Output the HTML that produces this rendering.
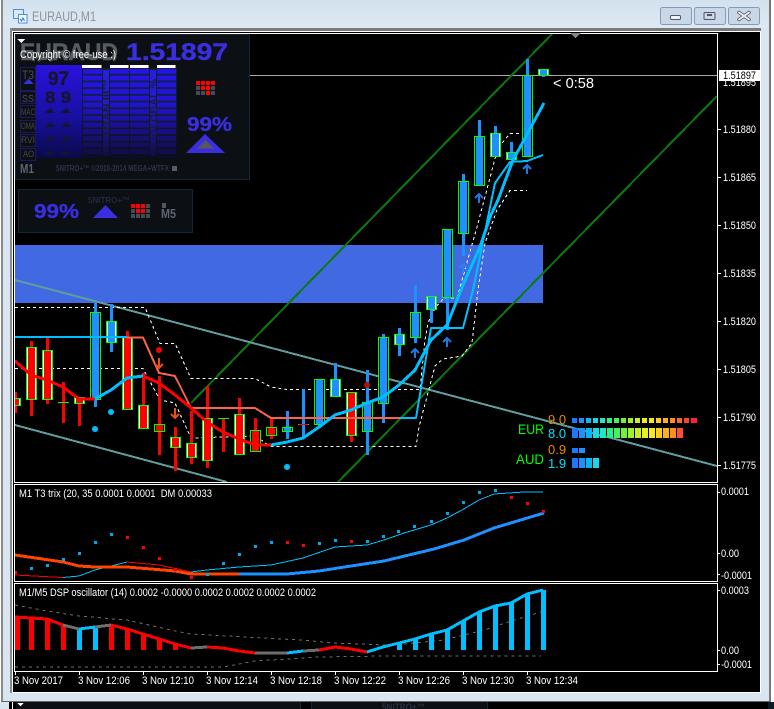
<!DOCTYPE html>
<html><head><meta charset="utf-8"><title>EURAUD,M1</title>
<style>
html,body{margin:0;padding:0;background:#fff;width:774px;height:709px;overflow:hidden}
svg{display:block}
text{font-family:"Liberation Sans",sans-serif;fill:#fff;font-size:11px}
.g{stroke:#0f0;stroke-width:1}
.w{fill:#fff}.k{fill:#000}
.r{fill:#f00}.b{fill:#1e90ff}
.l{fill:none;stroke-linejoin:round}
.ax{fill:#f4f4f4}
.d{fill:none;stroke:#fff;stroke-width:1;stroke-dasharray:3 3}
.gd{fill:none;stroke:#6e6e6e;stroke-width:1;stroke-dasharray:3 4}
</style></head><body>
<svg width="774" height="709" viewBox="0 0 774 709" xmlns="http://www.w3.org/2000/svg" shape-rendering="crispEdges">
<defs>
<linearGradient id="tb" x1="0" y1="0" x2="0" y2="1"><stop offset="0" stop-color="#d3e1ee"/><stop offset="1" stop-color="#dde8f3"/></linearGradient>
<linearGradient id="fade" x1="0" y1="0" x2="0" y2="1"><stop offset="0" stop-color="#0a0a14" stop-opacity="0"/><stop offset=".4" stop-color="#0a0a14" stop-opacity=".12"/><stop offset="1" stop-color="#0a0a14" stop-opacity=".82"/></linearGradient>
<linearGradient id="lc" x1="0" y1="0" x2="0" y2="1"><stop offset="0" stop-color="#2a12dc"/><stop offset=".5" stop-color="#1a10a8"/><stop offset="1" stop-color="#0a0a4a"/></linearGradient>
<pattern id="st" patternUnits="userSpaceOnUse" x="0" y="69" width="20" height="6.7"><rect width="20" height="6.7" fill="#0a2450"/><rect y="0" width="20" height="4.7" fill="#2a12e8"/></pattern>
<clipPath id="plot"><rect x="15" y="34" width="702" height="448"/></clipPath>
</defs>
<!-- window frame -->
<rect width="774" height="709" fill="#fff"/>
<rect x="1" y="0" width="769" height="702" fill="#d9e5f1"/>
<rect x="1" y="0" width="769" height="28" fill="url(#tb)"/>
<rect x="1" y="0" width="2" height="702" fill="#8a8a8a"/>
<rect x="769" y="0" width="2" height="702" fill="#777"/>
<rect x="10" y="28" width="751" height="3" fill="#7a7a7a"/>
<rect x="10" y="28" width="2" height="665" fill="#8a8a8a"/>
<rect x="12" y="31" width="749" height="662" fill="#fff"/>
<rect x="13" y="32" width="747" height="660" fill="#000"/>
<rect x="1" y="701" width="770" height="1" fill="#666"/>
<rect x="0" y="702" width="774" height="7" fill="#000"/>
<rect x="0" y="702" width="9" height="7" fill="#d9e5f1"/>
<rect x="12" y="702" width="1" height="7" fill="#fff"/>
<rect x="16" y="702" width="284" height="7" fill="#0c0f14"/>
<rect x="311" y="702" width="176" height="7" fill="#0c0f14"/>
<rect x="300" y="702" width="1" height="7" fill="#0f2a35"/>
<rect x="311" y="702" width="1" height="7" fill="#0f2a35"/>
<rect x="487" y="702" width="1" height="7" fill="#0f2a35"/>
<rect x="768" y="702" width="6" height="7" fill="#0c1a22"/>
<path d="M17 703h7l-3.500 3z" fill="#fff"/>
<text x="382" y="710" style="font-size:9px;font-weight:bold;fill:#2a3242" textLength="43" lengthAdjust="spacingAndGlyphs">5NITRO+™</text>

<!-- title bar -->
<g shape-rendering="auto">
<rect x="13.500" y="9.500" width="10" height="9" fill="#dbeafa" stroke="#4d90d8"/>
<rect x="18.500" y="14.500" width="8.500" height="8.500" fill="#f2f8ff" stroke="#4d90d8"/>
<path d="M20 19l1.500 2 1.500-3 1.500 3" fill="none" stroke="#2d7ad0"/>
<text x="32" y="21" style="font-size:13.500px;fill:#8d949b" textLength="64" lengthAdjust="spacingAndGlyphs">EURAUD,M1</text>
<rect x="660.500" y="7.500" width="31" height="17" rx="2" fill="#c8d8e8" stroke="#8a9ab5"/>
<rect x="694.500" y="7.500" width="31" height="17" rx="2" fill="#c8d8e8" stroke="#8a9ab5"/>
<rect x="728.500" y="7.500" width="31" height="17" rx="2" fill="#c8d8e8" stroke="#8a9ab5"/>
<rect x="670.500" y="15.500" width="10" height="4" rx="1" fill="#eef3f8" stroke="#556"/>
<rect x="704" y="12.500" width="11" height="7" rx="1" fill="none" stroke="#556"/>
<rect x="707" y="14" width="5" height="2" fill="#556"/>
<path d="M739 12.500l10 7M749 12.500l-10 7" stroke="#556" stroke-width="3.500" stroke-linecap="round"/>
<path d="M739 12.500l10 7M749 12.500l-10 7" stroke="#f0f4f8" stroke-width="1.800" stroke-linecap="round"/>
</g>

<!-- chart plot borders -->
<path d="M14.500 33.500H717.500V482.500H14.500Z" fill="none" stroke="#fff"/>
<path d="M14.500 484.500H717.500V581.500H14.500Z" fill="none" stroke="#fff"/>
<path d="M14.500 583.500H717.500V671.500H14.500Z" fill="none" stroke="#fff"/>

<!-- chart objects -->
<rect x="15" y="245" width="528" height="58" fill="#4169e1"/>
<path d="M250 75.500H717" stroke="#a8a8a8"/>
<g clip-path="url(#plot)">
<path d="M191 403L553 33" stroke="#0a7a0a" stroke-width="2" fill="none"/>
<path d="M338 482L717 96" stroke="#0a7a0a" stroke-width="2" fill="none"/>
<path d="M15 280L717 466" stroke="#5f9ea0" stroke-width="2" fill="none"/>
<path d="M15 425L227 482" stroke="#5f9ea0" stroke-width="2" fill="none"/>

<!-- dashed envelopes -->
<path class="d" d="M15 307.500H145L160 343.500H175L191 378.500H255L271 387L287 389.500H420L425 340L428 323L435 308L444 298H457L477 227L492 170L498 148L510 133.500H527"/>
<path class="d" d="M15 368.500H143L160 400L175 403L191 438L255 436L271 446.500H416L419 427L435 366L443 359L462 356L472 343L478 290L485 243L497 210L510 190.500H527"/>

<!-- candles -->
<path d="M15.500 392V413M31.500 341V416M47.500 337V404M63.500 382V423M79.500 397V426M127.500 331V409M143.500 373V428M159.500 376V455M175.500 427V471M191.500 411V464M207.500 386V468M223.500 418V452M239.500 398V454M255.500 418V451M271.500 418V439M351.500 392V442" stroke="#f00" stroke-width="3" fill="none"/>
<path d="M95.500 303V407M111.500 304V352M287.500 411V439M303.500 389V438M319.500 379V428M335.500 363V396M367.500 370V455M383.500 334V423M399.500 328V356M415.500 285V343M431.500 296V323M447.500 229V330M463.500 174V256M479.500 120V185M495.500 126V156M511.500 142V159M527.500 59V156M543.500 69V77" stroke="#1e90ff" stroke-width="3" fill="none"/>
<g class="g">
<rect x="10.500" y="398.500" width="10" height="7" class="w"/>
<rect x="26.500" y="347.500" width="10" height="52" class="w"/>
<rect x="42.500" y="350.500" width="10" height="49" class="w"/>
<rect x="74.500" y="397.500" width="10" height="6" class="w"/>
<rect x="90.500" y="312.500" width="10" height="87" class="k"/>
<rect x="106.500" y="321.500" width="10" height="21" class="w"/>
<rect x="122.500" y="337.500" width="10" height="72" class="w"/>
<rect x="138.500" y="405.500" width="10" height="23" class="w"/>
<rect x="154.500" y="424.500" width="10" height="7" class="k"/>
<rect x="170.500" y="437.500" width="10" height="10" class="w"/>
<rect x="186.500" y="443.500" width="10" height="14" class="w"/>
<rect x="202.500" y="418.500" width="10" height="42" class="w"/>
<rect x="234.500" y="414.500" width="10" height="40" class="w"/>
<rect x="250.500" y="430.500" width="10" height="21" class="k"/>
<rect x="266.500" y="427.500" width="10" height="8" class="k"/>
<rect x="282.500" y="427.500" width="10" height="4" class="k"/>
<rect x="314.500" y="379.500" width="10" height="45" class="k"/>
<rect x="330.500" y="379.500" width="10" height="17" class="w"/>
<rect x="346.500" y="392.500" width="10" height="43" class="w"/>
<rect x="362.500" y="402.500" width="10" height="29" class="k"/>
<rect x="378.500" y="337.500" width="10" height="66" class="k"/>
<rect x="394.500" y="334.500" width="10" height="10" class="w"/>
<rect x="410.500" y="312.500" width="10" height="25" class="k"/>
<rect x="426.500" y="296.500" width="10" height="13" class="w"/>
<rect x="442.500" y="229.500" width="10" height="68" class="k"/>
<rect x="458.500" y="181.500" width="10" height="52" class="k"/>
<rect x="474.500" y="136.500" width="10" height="49" class="k"/>
<rect x="490.500" y="133.500" width="10" height="23" class="w"/>
<rect x="506.500" y="152.500" width="10" height="7" class="w"/>
<rect x="522.500" y="75.500" width="10" height="81" class="k"/>
<rect x="538.500" y="69.500" width="10" height="6" class="w"/>
</g>
<path d="M58 402.500h11M218 418.500h11M298 424.500h11" stroke="#0f0"/>
<path d="M299 424.500h9" stroke="#f00"/>
<g class="r">
<rect x="12" y="399" width="7" height="6"/><rect x="28" y="348" width="7" height="51"/><rect x="44" y="351" width="7" height="48"/>
<rect x="76" y="398" width="7" height="5"/><rect x="124" y="338" width="7" height="71"/><rect x="140" y="406" width="7" height="22"/>
<rect x="156" y="425" width="7" height="6"/><rect x="172" y="438" width="7" height="9"/><rect x="188" y="444" width="7" height="13"/>
<rect x="204" y="419" width="7" height="41"/><rect x="236" y="415" width="7" height="39"/><rect x="252" y="431" width="7" height="20"/>
<rect x="268" y="428" width="7" height="7"/><rect x="348" y="393" width="7" height="42"/>
</g>
<g class="b">
<rect x="92" y="313" width="7" height="86"/><rect x="108" y="322" width="7" height="20"/><rect x="284" y="428" width="7" height="3"/>
<rect x="316" y="380" width="7" height="44"/><rect x="332" y="380" width="7" height="16"/><rect x="364" y="403" width="7" height="28"/>
<rect x="380" y="338" width="7" height="65"/><rect x="396" y="335" width="7" height="9"/><rect x="412" y="313" width="7" height="24"/>
<rect x="428" y="297" width="7" height="12"/><rect x="444" y="230" width="7" height="67"/><rect x="460" y="182" width="7" height="51"/>
<rect x="476" y="137" width="7" height="48"/><rect x="492" y="134" width="7" height="22"/><rect x="508" y="153" width="7" height="6"/>
<rect x="524" y="76" width="7" height="80"/><rect x="540" y="70" width="7" height="5"/>
</g>

<!-- moving averages -->
<path class="l" d="M127 337.500H143L159 373L175 376L191 408H255L271 418H400" stroke="#ff6347" stroke-width="2"/>
<path class="l" d="M15 337H127M400 418H416L431 328H463L473 290L495 183L510 162L527 161L543 155" stroke="#00bfff" stroke-width="2"/>
<path class="l" d="M15 361L31 375L47 380L63 387L79 399L95 399M143 376L159 383L175 395L191 408L207 422L223 432L239 439L255 445L271 445" stroke="#f00" stroke-width="3"/>
<path class="l" d="M95 399L111 390L127 378L143 376M271 445L287 442L303 438L319 427L335 415L351 410L367 403L383 397L399 385L415 370L431 340L447 325L463 285L480 247L490 217L498 200L513 160L523 142L531 127L544 103" stroke="#00bfff" stroke-width="3"/>
</g>
<g shape-rendering="auto">
<circle cx="159" cy="350" r="3" fill="#f00"/>
<circle cx="111" cy="412" r="3" fill="#00bfff"/>
<circle cx="95" cy="429" r="3" fill="#00bfff"/>
<circle cx="287" cy="467" r="3" fill="#00bfff"/>
<circle cx="367" cy="385" r="3" fill="#b01010"/>
<g fill="none" stroke-width="2">
<path d="M159 358V368M155 364l4 4 4-4" stroke="#e8501a"/>
<path d="M175 408V418M171 414l4 4 4-4" stroke="#e8501a"/>
<path d="M415 358V349M411 353l4-4 4 4" stroke="#1e78e8"/>
<path d="M447 347V338M443 342l4-4 4 4" stroke="#1e78e8"/>
<path d="M463 273V264M459 268l4-4 4 4" stroke="#2f80e8"/>
<path d="M479 203V194M475 198l4-4 4 4" stroke="#1e78e8"/>
<path d="M527 174V165M523 169l4-4 4 4" stroke="#1e78e8"/>
</g>
</g>

<path d="M570 33h11l-5.500 5z" fill="#888"/>
<text x="553" y="88" style="font-size:14.500px" textLength="41" lengthAdjust="spacingAndGlyphs">&lt; 0:58</text>

<!-- panel 1 -->
<rect x="15.500" y="34.500" width="234" height="145" fill="#0c0f14" stroke="#0f2a35"/>
<path d="M17 39h8l-4 4z" fill="#fff"/>
<text x="20" y="60" style="font-size:24px;font-weight:bold;fill:#565c64;stroke:#565c64;stroke-width:.4" textLength="98" lengthAdjust="spacingAndGlyphs">EURAUD</text>
<text x="126" y="60" style="font-size:24px;font-weight:bold;fill:#3a2fe0;stroke:#3a2fe0;stroke-width:.4" textLength="102" lengthAdjust="spacingAndGlyphs">1.51897</text>
<text x="21" y="59" style="font-size:11px;fill:#555" textLength="96" lengthAdjust="spacingAndGlyphs">Copyright © free-use :)</text>
<text x="20" y="58" style="font-size:11px" textLength="96" lengthAdjust="spacingAndGlyphs">Copyright © free-use :)</text>
<rect x="36" y="65" width="46" height="93" fill="url(#lc)"/>
<text x="48" y="85" style="font-size:19px;font-weight:bold;fill:#15152e;stroke:#15152e;stroke-width:.3" textLength="21" lengthAdjust="spacingAndGlyphs">97</text>
<text x="45" y="103" style="font-size:16.500px;font-weight:bold;fill:#15152e;stroke:#15152e;stroke-width:.3" textLength="26" lengthAdjust="spacingAndGlyphs">8 9</text>
<path d="M45 113h10l-5-5zM61 113h10l-5-5zM45 127h10l-5-5zM61 127h10l-5-5zM45 141h10l-5-5zM61 141h10l-5-5zM45 155h10l-5-5zM61 155h10l-5-5z" fill="#15152e" shape-rendering="auto"/>
<g fill="none" stroke="#1c1a5a">
<rect x="20.500" y="67.500" width="15" height="23"/><rect x="20.500" y="91.500" width="15" height="12"/>
<rect x="20.500" y="105.500" width="15" height="12"/><rect x="20.500" y="120.500" width="15" height="12"/>
<rect x="20.500" y="134.500" width="15" height="12"/><rect x="20.500" y="148.500" width="15" height="12"/>
</g>
<path d="M23 84h11l-5.500-5z" fill="#3a2fe0"/>
<text x="22" y="79" style="fill:#4a4f57;font-size:12px" textLength="12" lengthAdjust="spacingAndGlyphs">T3</text>
<text x="22" y="102" style="fill:#4a4f57;font-size:10.500px" textLength="12" lengthAdjust="spacingAndGlyphs">SS</text>
<text x="21" y="115" style="fill:#44494f;font-size:9px" textLength="14" lengthAdjust="spacingAndGlyphs">MAC</text>
<text x="21" y="129" style="fill:#44494f;font-size:9px" textLength="14" lengthAdjust="spacingAndGlyphs">OMA</text>
<text x="21" y="143" style="fill:#44494f;font-size:9px" textLength="14" lengthAdjust="spacingAndGlyphs">RVI</text>
<text x="23" y="157" style="fill:#44494f;font-size:9px" textLength="11" lengthAdjust="spacingAndGlyphs">AO</text>
<!-- bar columns -->
<rect x="82" y="68" width="95" height="90" fill="#0a2230"/>
<rect x="83" y="69" width="19" height="88" fill="url(#st)"/>
<rect x="110" y="69" width="19" height="88" fill="url(#st)"/>
<rect x="130" y="69" width="19" height="88" fill="url(#st)"/>
<rect x="157" y="69" width="19" height="88" fill="url(#st)"/>
<rect x="103" y="70" width="6" height="86" fill="#2a1ee0"/>
<rect x="150" y="70" width="6" height="86" fill="#2a1ee0"/>
<rect x="82" y="68" width="95" height="90" fill="url(#fade)"/>
<rect x="82" y="65" width="20" height="3" fill="#fff"/><rect x="101" y="65" width="1" height="3" fill="#e08020"/>
<rect x="110" y="65" width="19" height="3" fill="#fff"/><rect x="128" y="65" width="1" height="3" fill="#e08020"/>
<rect x="130" y="65" width="19" height="3" fill="#fff"/><rect x="148" y="65" width="1" height="3" fill="#e08020"/>
<rect x="157" y="65" width="19" height="3" fill="#fff"/><rect x="175" y="65" width="1" height="3" fill="#e08020"/>
<text transform="translate(110,137) rotate(-90)" style="font-size:10px;font-weight:bold;fill:#1a1a40" textLength="58" lengthAdjust="spacingAndGlyphs">TITAN III™</text>
<text transform="translate(157,137) rotate(-90)" style="font-size:10px;font-weight:bold;fill:#1a1a40" textLength="58" lengthAdjust="spacingAndGlyphs">GLOBAL %</text>
<!-- matrix -->
<path fill="#f00" d="M196 81h4v4h-4zM201 81h4v4h-4zM206 81h4v4h-4zM211 81h4v4h-4zM201 86h4v4h-4zM206 86h4v4h-4zM206 91h4v4h-4z"/>
<path fill="#444b55" d="M196 86h4v4h-4zM211 86h4v4h-4zM196 91h4v4h-4zM201 91h4v4h-4zM211 91h4v4h-4z"/>
<text x="187" y="131" style="font-size:20px;font-weight:bold;fill:#3a2fe0;stroke:#3a2fe0;stroke-width:.3" textLength="45" lengthAdjust="spacingAndGlyphs">99%</text>
<g shape-rendering="auto">
<path d="M186 153L205 134L225 153Z" fill="#3a2fe0"/>
<path d="M197 148.500L205.500 140L214 148.500Z" fill="#55585f"/>
</g>
<text x="20" y="173" style="font-size:13px;font-weight:bold;fill:#5c6570" textLength="14" lengthAdjust="spacingAndGlyphs">M1</text>
<text x="56" y="171" style="font-size:8px;font-weight:bold;fill:#2c3547" textLength="113" lengthAdjust="spacingAndGlyphs">5NITRO+™ ©2010-2014 MEGA+WTFX</text>
<rect x="172" y="166" width="5" height="5" fill="#555c66"/>

<!-- panel 2 -->
<rect x="18.500" y="189.500" width="174" height="43" fill="#0c0f14" stroke="#0f2a35"/>
<text x="34" y="218" style="font-size:20px;font-weight:bold;fill:#3a2fe0;stroke:#3a2fe0;stroke-width:.3" textLength="45" lengthAdjust="spacingAndGlyphs">99%</text>
<text x="88" y="203" style="font-size:8.500px;font-weight:bold;fill:#1e2c3c" textLength="42" lengthAdjust="spacingAndGlyphs">5NITRO+™</text>
<path d="M93 218L105.500 205L118 218Z" fill="#3a2fe0" shape-rendering="auto"/>
<path fill="#f00" d="M131 204h4v4h-4zM136 204h4v4h-4zM141 204h4v4h-4zM141 209h4v4h-4zM136 209h4v4h-4z"/>
<path fill="#444b55" d="M146 204h4v4h-4zM131 209h4v4h-4zM146 209h4v4h-4zM131 214h4v4h-4zM136 214h4v4h-4zM141 214h4v4h-4zM146 214h4v4h-4z"/>
<rect x="162" y="203" width="4" height="5" fill="#505864"/>
<text x="161" y="218" style="font-size:13px;font-weight:bold;fill:#5c6570" textLength="15" lengthAdjust="spacingAndGlyphs">M5</text>

<!-- currency legend -->
<text x="548" y="424" style="font-size:13px;fill:#e88a00">9.0</text>
<text x="548" y="438" style="font-size:13px;fill:#00e0ff">8.0</text>
<text x="518" y="434" style="font-size:13.500px;fill:#0f0" textLength="26" lengthAdjust="spacingAndGlyphs">EUR</text>
<text x="548" y="454" style="font-size:13px;fill:#e88a00">0.9</text>
<text x="548" y="468" style="font-size:13px;fill:#00e0ff">1.9</text>
<text x="516" y="464" style="font-size:13.500px;fill:#0f0" textLength="28" lengthAdjust="spacingAndGlyphs">AUD</text>
<g>
<rect x="572" y="418" width="5" height="5" fill="#1e78ff"/><rect x="579" y="418" width="5" height="5" fill="#1e90ff"/><rect x="586" y="418" width="5" height="5" fill="#0cb4f0"/><rect x="593" y="418" width="5" height="5" fill="#18d8e8"/><rect x="600" y="418" width="5" height="5" fill="#1ee8c8"/><rect x="607" y="418" width="5" height="5" fill="#28f090"/><rect x="614" y="418" width="5" height="5" fill="#48f060"/><rect x="621" y="418" width="5" height="5" fill="#70f040"/><rect x="628" y="418" width="5" height="5" fill="#a0f030"/><rect x="635" y="418" width="5" height="5" fill="#c8f028"/><rect x="642" y="418" width="5" height="5" fill="#e8f020"/><rect x="649" y="418" width="5" height="5" fill="#f8e820"/><rect x="656" y="418" width="5" height="5" fill="#ffd020"/><rect x="663" y="418" width="5" height="5" fill="#ffb020"/><rect x="670" y="418" width="5" height="5" fill="#ff9020"/><rect x="677" y="418" width="5" height="5" fill="#ff6828"/><rect x="684" y="418" width="5" height="5" fill="#ff4030"/><rect x="691" y="418" width="6" height="5" fill="#ff2040"/>
<rect x="572" y="428" width="6" height="10" fill="#1e78ff"/><rect x="579" y="428" width="6" height="10" fill="#1e90ff"/><rect x="586" y="428" width="6" height="10" fill="#0cb4f0"/><rect x="593" y="428" width="6" height="10" fill="#18d8e8"/><rect x="600" y="428" width="6" height="10" fill="#1ee8c8"/><rect x="607" y="428" width="6" height="10" fill="#28f090"/><rect x="614" y="428" width="6" height="10" fill="#48f060"/><rect x="621" y="428" width="6" height="10" fill="#70f040"/><rect x="628" y="428" width="6" height="10" fill="#a0f030"/><rect x="635" y="428" width="6" height="10" fill="#c8f028"/><rect x="642" y="428" width="6" height="10" fill="#e8f020"/><rect x="649" y="428" width="6" height="10" fill="#f8e820"/><rect x="656" y="428" width="6" height="10" fill="#ffd020"/><rect x="663" y="428" width="6" height="10" fill="#ffb020"/><rect x="670" y="428" width="6" height="10" fill="#ff9020"/><rect x="677" y="428" width="6" height="10" fill="#ff5030"/>
<rect x="572" y="448" width="6" height="5" fill="#1e78ff"/><rect x="579" y="448" width="6" height="5" fill="#1e90ff"/>
<rect x="572" y="458" width="6" height="10" fill="#1e78ff"/><rect x="579" y="458" width="6" height="10" fill="#1e90ff"/><rect x="586" y="458" width="6" height="10" fill="#0cb4f0"/><rect x="593" y="458" width="6" height="10" fill="#18d8e8"/>
</g>

<!-- sub window 1 -->
<text x="19" y="497" style="font-size:11px" textLength="193" lengthAdjust="spacingAndGlyphs">M1 T3 trix (20, 35 0.0001 0.0001 &#160;DM 0.00033</text>
<path class="l" d="M15 575L63 577.500M127 562L159 565L191 572" stroke="#f00" stroke-width="1"/>
<path class="l" d="M63 577.500L79 576L95 570L111 566L127 562M191 572L207 570L239 567L271 565L303 558L335 547L367 545L384 540L404 533L431 525L447 518L462 510L479 500L494 494L524 492L543 492" stroke="#00bfff" stroke-width="1"/>
<path class="l" d="M15 555L63 562L79 566L95 567L127 567L175 571L191 574L239 574" stroke="#ff4500" stroke-width="3"/>
<path class="l" d="M239 574H287L319 571L351 566L384 561L434 549L464 540L494 528L544 513" stroke="#1e90ff" stroke-width="3"/>
<path fill="#00a8e8" d="M30 567h3v3h-3zM46 564h3v3h-3zM62 558h3v3h-3zM78 552h3v3h-3zM94 541h3v3h-3zM110 533h3v3h-3zM206 573h3v3h-3zM222 562h3v3h-3zM238 553h3v3h-3zM254 545h3v3h-3zM270 541h3v3h-3zM318 542h3v3h-3zM334 539h3v3h-3zM366 540h3v3h-3zM382 535h3v3h-3zM397 530h3v3h-3zM413 525h3v3h-3zM430 520h3v3h-3zM446 512h3v3h-3zM462 501h3v3h-3zM478 491h3v3h-3zM494 489h3v3h-3z"/>
<path fill="#f00" d="M15 571h2v3h-2zM126 536h3v3h-3zM142 546h3v3h-3zM158 557h3v3h-3zM174 568h3v3h-3zM190 576h3v3h-3zM286 541h3v3h-3zM302 544h3v3h-3zM350 540h3v3h-3zM510 496h3v3h-3zM526 502h3v3h-3zM542 510h3v3h-3z"/>

<!-- sub window 2 -->
<text x="19" y="596" style="font-size:11px" textLength="297" lengthAdjust="spacingAndGlyphs">M1/M5 DSP oscillator (14) 0.0002 -0.0000 0.0002 0.0002 0.0002 0.0002</text>
<path class="gd" d="M15 605L47 611L79 616L127 620L175 631L191 634L300 640L335 643L384 645L404 644L444 640L472 633L491 628L502 624L521 618L541 612"/>
<path class="gd" d="M15 667H223L255 661L287 659L319 657L384 656H541"/>
<path fill="#f00" d="M15 617h5v33h-5zM29 619h5v31h-5zM45 619h5v31h-5zM61 625h5v25h-5zM109 625h5v25h-5zM125 629h5v21h-5zM141 634h5v16h-5zM157 639h5v11h-5zM173 644h5v6h-5z"/>
<path fill="#00bfff" d="M77 629h5v21h-5zM93 627h5v23h-5zM397 643h5v7h-5zM413 639h5v11h-5zM429 634h5v16h-5zM445 630h5v20h-5zM461 621h5v29h-5zM477 612h5v38h-5zM493 606h5v44h-5zM509 603h5v47h-5zM525 594h5v56h-5zM541 590h5v60h-5z"/>
<g fill="none" stroke-width="3" stroke-linejoin="round">
<path d="M15 617L47 619L63 625M111 625L127 629L143 634L159 639L175 644L191 648M207 647L223 648L239 651L255 653M319 650L335 647L351 649L367 652" stroke="#f00"/>
<path d="M63 625L79 629M95 627L111 625M191 648L207 647M255 653H287M303 651L319 650" stroke="#6e6e6e"/>
<path d="M79 629L95 627M287 653L303 651M367 652L383 647L399 643L415 639L431 634L447 630L463 621L479 612L495 606L511 603L527 594L543 590" stroke="#00bfff"/>
</g>

<!-- price axis -->
<g stroke="#fff">
<path d="M717 129.500h4M717 177.500h4M717 225.500h4M717 273.500h4M717 321.500h4M717 369.500h4M717 417.500h4M717 465.500h4M717 492.500h3M717 553.500h3M717 574.500h3M717 590.500h3M717 650.500h3M717 664.500h3"/>
<path d="M15.500 671v4M79.500 671v4M143.500 671v4M207.500 671v4M271.500 671v4M335.500 671v4M399.500 671v4M463.500 671v4M527.500 671v4"/>
</g>
<g class="ax">
<text x="723" y="86" textLength="33" lengthAdjust="spacingAndGlyphs">1.51895</text>
<rect x="719" y="70" width="41" height="11" fill="#fff"/>
<text x="723" y="79" style="fill:#000" textLength="33" lengthAdjust="spacingAndGlyphs">1.51897</text>
<text x="723" y="133" textLength="33" lengthAdjust="spacingAndGlyphs">1.51880</text>
<text x="723" y="181" textLength="33" lengthAdjust="spacingAndGlyphs">1.51865</text>
<text x="723" y="229" textLength="33" lengthAdjust="spacingAndGlyphs">1.51850</text>
<text x="723" y="277" textLength="33" lengthAdjust="spacingAndGlyphs">1.51835</text>
<text x="723" y="325" textLength="33" lengthAdjust="spacingAndGlyphs">1.51820</text>
<text x="723" y="373" textLength="33" lengthAdjust="spacingAndGlyphs">1.51805</text>
<text x="723" y="421" textLength="33" lengthAdjust="spacingAndGlyphs">1.51790</text>
<text x="723" y="469" textLength="33" lengthAdjust="spacingAndGlyphs">1.51775</text>
<text x="721" y="495" textLength="28" lengthAdjust="spacingAndGlyphs">0.0001</text>
<text x="721" y="557" textLength="18" lengthAdjust="spacingAndGlyphs">0.00</text>
<text x="721" y="579" textLength="31" lengthAdjust="spacingAndGlyphs">-0.0001</text>
<text x="721" y="594" textLength="28" lengthAdjust="spacingAndGlyphs">0.0003</text>
<text x="721" y="654" textLength="18" lengthAdjust="spacingAndGlyphs">0.00</text>
<text x="721" y="668" textLength="31" lengthAdjust="spacingAndGlyphs">-0.0001</text>
</g>
<!-- time axis -->
<g>
<text x="14" y="684" textLength="49" lengthAdjust="spacingAndGlyphs">3 Nov 2017</text>
<text x="78" y="684" textLength="52" lengthAdjust="spacingAndGlyphs">3 Nov 12:06</text>
<text x="142" y="684" textLength="52" lengthAdjust="spacingAndGlyphs">3 Nov 12:10</text>
<text x="206" y="684" textLength="52" lengthAdjust="spacingAndGlyphs">3 Nov 12:14</text>
<text x="270" y="684" textLength="52" lengthAdjust="spacingAndGlyphs">3 Nov 12:18</text>
<text x="334" y="684" textLength="52" lengthAdjust="spacingAndGlyphs">3 Nov 12:22</text>
<text x="398" y="684" textLength="52" lengthAdjust="spacingAndGlyphs">3 Nov 12:26</text>
<text x="462" y="684" textLength="52" lengthAdjust="spacingAndGlyphs">3 Nov 12:30</text>
<text x="526" y="684" textLength="52" lengthAdjust="spacingAndGlyphs">3 Nov 12:34</text>
</g>
</svg>
</body></html>
